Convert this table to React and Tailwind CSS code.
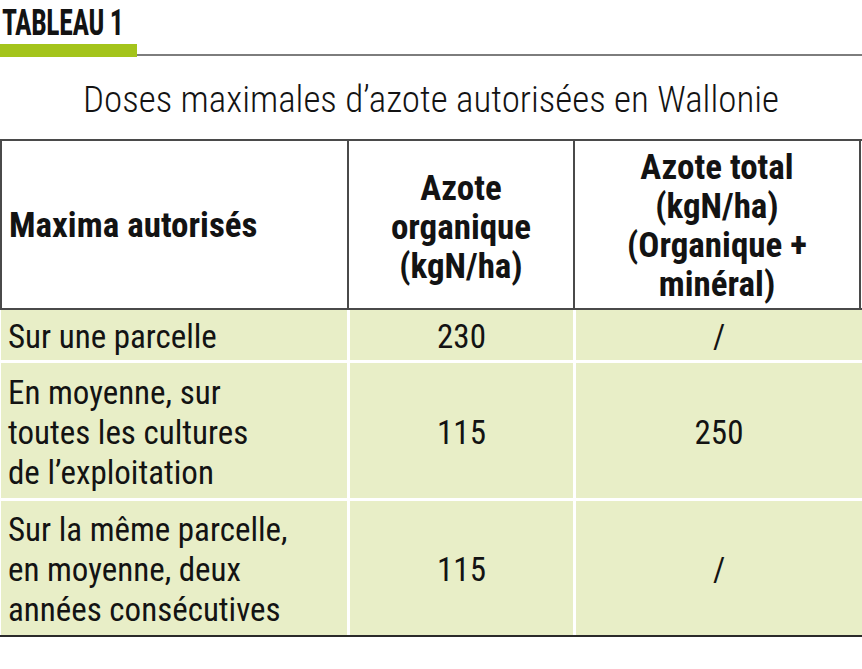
import React from "react";

const font = { fontFamily: '"Roboto Condensed", "Liberation Sans Narrow", "DejaVu Sans Condensed", Roboto, sans-serif' };

export default function App() {
  const rows = [
    { label: ["Sur une parcelle"], org: "230", tot: "/", h: "h-[50px]" },
    { label: ["En moyenne, sur", "toutes les cultures", "de l’exploitation"], org: "115", tot: "250", h: "h-[135px]" },
    { label: ["Sur la même parcelle,", "en moyenne, deux", "années consécutives"], org: "115", tot: "/", h: "h-[134px]" },
  ];
  return (
    <div className="w-[862px] h-[669px] bg-white text-[#131313] overflow-hidden" style={font}>
      <div className="pl-[2px] pt-[7px] h-[44px]">
        <div className="inline-block origin-left scale-x-[0.77] text-[36px] font-bold leading-[32px] tracking-[-0.5px]">TABLEAU 1</div>
      </div>
      <div className="flex items-end h-[13px]">
        <div className="w-[137px] h-[13px] bg-[#a4c41b]" />
        <div className="flex-1 h-[2px] bg-[#7d7d7d] mb-[1px]" />
      </div>
      <div className="h-[82px] flex items-center justify-center">
        <div className="text-[37px] leading-[40px] font-light pt-[4px]">Doses maximales d’azote autorisées en Wallonie</div>
      </div>
      <div className="w-[862px]">
        <div className="grid grid-cols-[349px_226px_286px] border-t-2 border-b-2 border-[#4a4a4a] h-[171px]">
          <div className="border-l-2 border-r-2 border-[#4a4a4a] flex items-center pl-[7px] pt-[2px] text-[35px] font-bold leading-[39px]">Maxima autorisés</div>
          <div className="border-r-2 border-[#4a4a4a] flex items-center justify-center text-center text-[35px] font-bold leading-[39px] pt-[6px]">
            <div>Azote<br />organique<br />(kgN/ha)</div>
          </div>
          <div className="border-r-2 border-[#4a4a4a] flex items-center justify-center text-center text-[35px] font-bold leading-[39px] pt-[2px]">
            <div>Azote total<br />(kgN/ha)<br />(Organique +<br />minéral)</div>
          </div>
        </div>
        <div className="grid grid-cols-[346px_223px_286px] gap-x-[3px] gap-y-[3px] bg-white pl-[1px] pr-[1px] border-b-2 border-[#2a2a2a]">
          {rows.map((r, i) => (
            <React.Fragment key={i}>
              <div className={`${r.h} bg-[#e8eec7] flex items-center pl-[7px] pt-[4px] text-[33px] leading-[40px]`}>
                <div>{r.label.map((l, j) => (<div key={j}>{l}</div>))}</div>
              </div>
              <div className={`${r.h} bg-[#e8eec7] flex items-center justify-center pt-[4px] text-[33px] leading-[40px]`}>{r.org}</div>
              <div className={`${r.h} bg-[#e8eec7] flex items-center justify-center pt-[4px] text-[33px] leading-[40px]`}>{r.tot}</div>
            </React.Fragment>
          ))}
        </div>
      </div>
    </div>
  );
}
